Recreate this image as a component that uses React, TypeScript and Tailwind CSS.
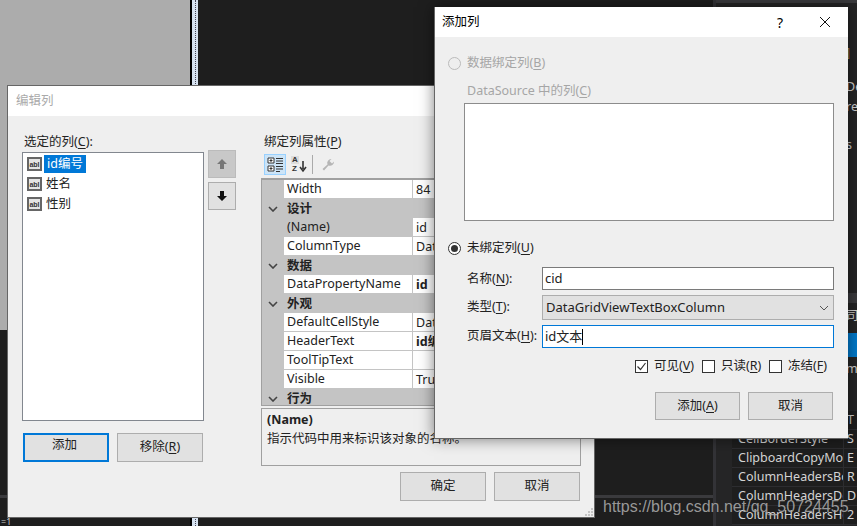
const FONT = "font-['Noto_Sans','Noto_Sans_CJK_SC',sans-serif]";

const Underlined = ({ text, k, after = "" }: { text: string; k: string; after?: string }) => (
  <>
    {text}(<span className="underline underline-offset-2">{k}</span>){after}
  </>
);

const AblIcon = () => (
  <span className="flex h-[14px] w-[15px] shrink-0 items-center justify-center border-2 border-[#666] bg-[#e4e4e4] font-['Liberation_Sans'] text-[7px] font-bold leading-none text-[#333]">
    abl
  </span>
);

const Button = ({
  children,
  focused = false,
  h = "h-[29px]",
  w = "w-[86px]",
}: {
  children: React.ReactNode;
  focused?: boolean;
  h?: string;
  w?: string;
}) => (
  <div
    className={`flex ${h} ${w} items-center justify-center bg-[#e1e1e1] text-[#222] ${
      focused ? "border-2 border-[#0078d7]" : "border border-[#adadad]"
    }`}
  >
    {children}
  </div>
);

const Chevron = () => (
  <svg width="10" height="6" viewBox="0 0 10 6" className="mx-auto">
    <path d="M1 1l4 4 4-4" fill="none" stroke="#444" strokeWidth="1.6" />
  </svg>
);

const Category = ({ label }: { label: string }) => (
  <div className="flex h-[19px] items-center bg-[#c4c4c4] pt-[1px]">
    <div className="w-[22px] shrink-0">
      <Chevron />
    </div>
    <span className="pl-[3px] font-bold">{label}</span>
  </div>
);

const Prop = ({ name, value, bold = false, selected = false }: { name: string; value: string; bold?: boolean; selected?: boolean }) => (
  <div className={`flex h-[19px] items-stretch border-b border-[#c4c4c4] ${selected ? "bg-[#c4c4c4]" : "bg-white"}`}>
    <div className="w-[22px] shrink-0 bg-[#c4c4c4]" />
    <div className="flex w-[129px] shrink-0 items-center border-r border-[#c4c4c4] pl-[3px] pt-[1px] whitespace-nowrap">{name}</div>
    <div className={`flex-1 overflow-hidden whitespace-nowrap bg-white pl-[3px] leading-[20px] ${bold ? "font-bold" : ""}`}>{value}</div>
  </div>
);

const Check = ({ checked = false, children }: { checked?: boolean; children: React.ReactNode }) => (
  <div className="flex items-center gap-[6px]">
    <span className="flex h-[13px] w-[13px] items-center justify-center border border-[#333] bg-white">
      {checked && (
        <svg width="11" height="11" viewBox="0 0 11 11">
          <path d="M1.5 5.5l3 3 5-6.5" fill="none" stroke="#333" strokeWidth="1.2" />
        </svg>
      )}
    </span>
    <span className="w-[39px] whitespace-nowrap">{children}</span>
  </div>
);

const Radio = ({ checked = false, disabled = false }: { checked?: boolean; disabled?: boolean }) => (
  <span
    className={`flex h-[13px] w-[13px] items-center justify-center rounded-full border ${
      disabled ? "border-[#bbb] bg-[#eee]" : "border-[#333] bg-white"
    }`}
  >
    {checked && <span className="h-[7px] w-[7px] rounded-full bg-[#333]" />}
  </span>
);

const Grip = () => (
  <svg width="8" height="8" viewBox="0 0 8 8" className="absolute bottom-[1px] right-[1px]">
    <path d="M6 0h2v2H6zM3 3h2v2H3zM6 3h2v2H6zM0 6h2v2H0zM3 6h2v2H3zM6 6h2v2H6z" fill="#c4c4c4" />
  </svg>
);

const CategoryIcon = () => (
  <svg width="16" height="15" viewBox="0 0 16 15">
    <path d="M1 1h6v5H1zM1 9h6v5H1z" fill="#fff" stroke="#333" />
    <path d="M2.500 3.500h3M4 2v3M2.500 11.500h3M4 10v3" stroke="#333" />
    <path d="M9 1.500h7M9 4h7M9 6.500h7M9 9.500h7M9 12h7M9 14.500h4" stroke="#333" />
  </svg>
);

const SortIcon = () => (
  <div className="relative h-[18px] w-[16px] font-['Liberation_Sans'] text-[8px] font-bold leading-[8px] text-[#333]">
    <span className="absolute left-0 top-0 bg-[#ddd] px-[1px]">A</span>
    <span className="absolute left-0 top-[9px] px-[1px]">Z</span>
    <svg width="8" height="12" viewBox="0 0 8 12" className="absolute left-[8px] top-[5px]">
      <path d="M4 0v8M1 6l3 4 3-4" fill="none" stroke="#333" strokeWidth="1.600" />
    </svg>
  </div>
);

const WrenchIcon = () => (
  <svg width="14" height="14" viewBox="0 0 14 14">
    <path d="M13 3.500a4 4 0 0 1-5.500 4L3 12.500 1.500 11l5-4.500A4 4 0 0 1 10.500 1L8.500 3l2.500 2.500 2-2z" fill="#b5b5b5" />
  </svg>
);

const EditDialog = () => (
  <div className="absolute left-[7px] top-[85px] flex h-[433px] w-[588px] flex-col border border-[#666] bg-[#efefef] text-[12.5px] text-[#222]">
    <div className="flex h-[30px] shrink-0 items-center bg-white pl-[8px] text-[#aaa]">编辑列</div>
    <div className="flex flex-1 pl-[14px] pt-[16px]">
      <div className="flex w-[182px] shrink-0 flex-col">
        <div className="h-[20px] pl-[2px] leading-[20px]">
          <Underlined text="选定的列" k="C" after=":" />
        </div>
        <div className="flex h-[269px] flex-col border border-[#82878f] bg-white pl-[4px] pt-[1px]">
          {["id编号", "姓名", "性别"].map((name, i) => (
            <div key={name} className="flex h-[20px] items-center gap-[2px]">
              <AblIcon />
              <span className={i === 0 ? "bg-[#0078d7] px-[3px] text-white" : "pl-[2px]"}>{name}</span>
            </div>
          ))}
        </div>
        <div className="ml-[1px] mt-[12px] flex gap-[8px]">
          <Button focused>
            <span className="-ml-[3px] -mt-[4px]">添加</span>
          </Button>
          <Button>
            <Underlined text="移除" k="R" />
          </Button>
        </div>
      </div>
      <div className="ml-[4px] mt-[18px] flex w-[28px] shrink-0 flex-col gap-[4px]">
        <div className="flex h-[28px] items-center justify-center border border-[#bbb] bg-[#c8c8c8]">
          <svg width="12" height="12" viewBox="0 0 12 12">
            <path d="M6 1l5 5H8v5H4V6H1z" fill="#777" />
          </svg>
        </div>
        <div className="flex h-[28px] items-center justify-center border border-[#adadad] bg-[#e1e1e1]">
          <svg width="12" height="12" viewBox="0 0 12 12">
            <path d="M6 11L1 6h3V1h4v5h3z" fill="#111" />
          </svg>
        </div>
      </div>
      <div className="ml-[25px] flex w-[320px] shrink-0 flex-col">
        <div className="h-[20px] pl-[3px] leading-[20px]">
          <Underlined text="绑定列属性" k="P" />
        </div>
        <div className="mt-[2px] flex h-[21px] items-center pl-[3px]">
          <div className="flex h-[21px] w-[22px] items-center justify-center border border-[#99d1ff] bg-[#cce4f7]">
            <CategoryIcon />
          </div>
          <div className="ml-[4px] flex w-[18px] justify-center">
            <SortIcon />
          </div>
          <div className="ml-[4px] h-[19px] w-px bg-[#aaa]" />
          <div className="ml-[8px]">
            <WrenchIcon />
          </div>
        </div>
        <div className="mt-[3px] h-[228px] overflow-hidden border border-[#a0a0a0] border-t-2 bg-[#c4c4c4]">
          <Prop name="Width" value="84" />
          <Category label="设计" />
          <Prop name="(Name)" value="id" selected />
          <Prop name="ColumnType" value="DataGridViewTextBoxColumn" />
          <Category label="数据" />
          <Prop name="DataPropertyName" value="id" bold />
          <Category label="外观" />
          <Prop name="DefaultCellStyle" value="DataGridViewCellStyle" />
          <Prop name="HeaderText" value="id编号" bold />
          <Prop name="ToolTipText" value="" />
          <Prop name="Visible" value="True" />
          <Category label="行为" />
        </div>
        <div className="mt-[2px] h-[58px] border border-[#a0a0a0] pl-[5px] pt-[2px]">
          <div className="font-bold leading-[18px]">(Name)</div>
          <div className="leading-[19px]">指示代码中用来标识该对象的名称。</div>
        </div>
        <div className="mt-[6px] flex justify-end gap-[8px] pr-[1px]">
          <Button>确定</Button>
          <Button>取消</Button>
        </div>
      </div>
    </div>
    <Grip />
  </div>
);

const AddDialog = () => (
  <div className="absolute left-[434px] top-[7px] flex h-[432px] w-[414px] flex-col border-b border-l border-[#666] bg-[#efefef] text-[12.5px] text-[#222] shadow-[0_0_14px_rgba(0,0,0,0.5)]">
    <div className="flex h-[30px] shrink-0 items-center justify-between bg-white pl-[7px] pr-[17px] text-black">
      <span>添加列</span>
      <div className="flex items-center gap-[36px]">
        <span className="text-[14px]">?</span>
        <svg width="12" height="12" viewBox="0 0 12 12">
          <path d="M1 1l10 10M11 1L1 11" stroke="#111" strokeWidth="1" />
        </svg>
      </div>
    </div>
    <div className="mt-[19px] flex h-[14px] items-center gap-[6px] pl-[13px] text-[#a6a6a6]">
      <Radio disabled />
      <span className="pt-[1px]">
        <Underlined text="数据绑定列" k="B" />
      </span>
    </div>
    <div className="ml-[32px] mt-[13px] h-[16px] leading-[16px] text-[#a6a6a6]">
      DataSource 中的<Underlined text="列" k="C" />
    </div>
    <div className="ml-[29px] mt-[4px] h-[118px] w-[370px] border border-[#8c8c8c] bg-white" />
    <div className="mt-[20px] flex h-[14px] items-center gap-[6px] pl-[13px]">
      <Radio checked />
      <span className="pt-[1px]">
        <Underlined text="未绑定列" k="U" />
      </span>
    </div>
    <div className="mt-[12px] flex h-[23px] items-center pl-[32px]">
      <span className="w-[75px] shrink-0 pt-[1px]">
        <Underlined text="名称" k="N" after=":" />
      </span>
      <div className="flex h-full w-[292px] items-center border border-[#7a7a7a] bg-white pl-[2px] text-[13px]">cid</div>
    </div>
    <div className="mt-[5px] flex h-[25px] items-center pl-[32px]">
      <span className="w-[75px] shrink-0">
        <Underlined text="类型" k="T" after=":" />
      </span>
      <div className="flex h-full w-[292px] items-center justify-between border border-[#adadad] bg-[#e1e1e1] pl-[3px] pr-[4px] text-[13px]">
        <span>DataGridViewTextBoxColumn</span>
        <svg width="10" height="6" viewBox="0 0 10 6">
          <path d="M1 1l4 4 4-4" fill="none" stroke="#555" strokeWidth="1" />
        </svg>
      </div>
    </div>
    <div className="mt-[5px] flex h-[23px] items-center pl-[32px]">
      <span className="w-[75px] shrink-0 whitespace-nowrap">
        <Underlined text="页眉文本" k="H" after=":" />
      </span>
      <div className="flex h-full w-[292px] items-center border border-[#0078d7] bg-white pl-[2px] text-[13px]">
        id文本
        <span className="h-[16px] w-px bg-black" />
      </div>
    </div>
    <div className="ml-[200px] mt-[11px] flex h-[14px] gap-[9px]">
      <Check checked>
        <Underlined text="可见" k="V" />
      </Check>
      <Check>
        <Underlined text="只读" k="R" />
      </Check>
      <Check>
        <Underlined text="冻结" k="F" />
      </Check>
    </div>
    <div className="ml-[220px] mt-[19px] flex gap-[8px]">
      <Button h="h-[28px]" w="w-[85px]">
        <Underlined text="添加" k="A" />
      </Button>
      <Button h="h-[28px]" w="w-[85px]">
        取消
      </Button>
    </div>
  </div>
);

const GridRow = ({ name, value }: { name: string; value: string }) => (
  <div className="flex h-[19px] shrink-0 items-center border-b border-[#2d2d30] bg-[#1e1e1e] pl-[6px] text-[#d4d4d4]">
    <span className="w-[105px] shrink-0 overflow-hidden whitespace-nowrap">{name}</span>
    <span className="h-full w-px bg-[#2d2d30]" />
    <span className="pl-[3px]">{value}</span>
  </div>
);

const Tail = ({ text, className = "text-[#d4d4d4]" }: { text: string; className?: string }) => (
  <div className={`h-[16px] pl-[130px] leading-[16px] whitespace-nowrap ${className}`}>{text}</div>
);

const SidePanel = () => (
  <div className="flex w-[144px] shrink-0 flex-col overflow-hidden border-l-[3px] border-[#333337] bg-[#252526] text-[12.5px]">
    <div className="h-[3px] shrink-0 bg-[#3a3a3d]" />
    <div className="h-[42px] shrink-0" />
    <Tail text="]" className="text-[#b08a4a]" />
    <div className="h-[18px] shrink-0" />
    <Tail text="De" />
    <div className="h-[4px] shrink-0" />
    <Tail text="re" />
    <div className="h-[22px] shrink-0" />
    <Tail text="s" />
    <div className="h-[140px] shrink-0" />
    <div className="h-[10px] shrink-0 bg-[#3a3a3d]" />
    <div className="h-[5px] shrink-0" />
    <Tail text="司" />
    <div className="h-[9px] shrink-0" />
    <div className="h-[24px] shrink-0 bg-[#007acc]" />
    <div className="h-[4px] shrink-0" />
    <Tail text="m" />
    <div className="h-[34px] shrink-0" />
    <div className="ml-[16px] flex flex-col">
      <GridRow name="Tag" value="T" />
      <GridRow name="CellBorderStyle" value="S" />
      <GridRow name="ClipboardCopyMode" value="E" />
      <GridRow name="ColumnHeadersBorderStyle" value="R" />
      <GridRow name="ColumnHeadersDefaultCellStyle" value="D" />
      <GridRow name="ColumnHeadersHeight" value="2" />
    </div>
  </div>
);

export default function App() {
  return (
    <div className={`relative flex h-[526px] w-[857px] overflow-hidden bg-[#1e1e1e] ${FONT}`}>
      {/* left designer surface, then its splitter */}
      <div className="flex w-[190px] shrink-0 flex-col">
        <div className="h-[330px] shrink-0 bg-[#acacac]" />
        <div className="mt-[165px] h-[3px] shrink-0 bg-[#3a3a3d]" />
        <div className="mt-[20px] pl-[1px] text-[9px] leading-[8px] text-[#ccc]">=1</div>
      </div>
      <div className="w-[2px] shrink-0 bg-black" />
      <div className="flex w-[6px] shrink-0 justify-center bg-[#d6e2f0]">
        <div className="h-full border-l border-dotted border-[#445]" />
      </div>
      <div className="flex w-[515px] shrink-0 flex-col">
        <div className="mt-[495px] h-[3px] bg-[#3a3a3d]" />
      </div>
      <SidePanel />
      <EditDialog />
      <AddDialog />
      <div className="absolute left-[603px] top-[497px] font-['Liberation_Sans'] text-[16px] leading-[20px] whitespace-nowrap text-[#a8a8a8]/90">
        https://blog.csdn.net/qq_50724455
      </div>
    </div>
  );
}
